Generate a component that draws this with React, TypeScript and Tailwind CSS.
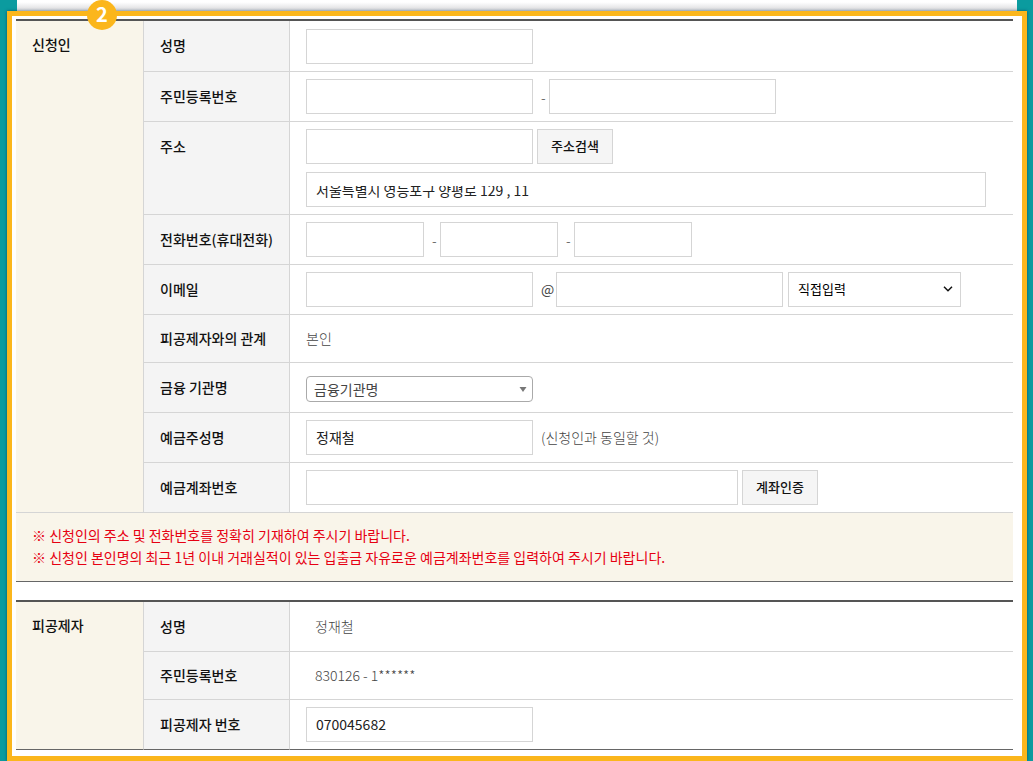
import type { ReactNode } from "react";
import clsx from "clsx";

const FIELD = "h-[35px] max-w-full border border-[#d5d5d5] bg-white px-[9px] pb-0.5 text-sm text-[#222] outline-none";
const BUTTON = "h-[35px] w-[76px] shrink-0 border border-[#d5d5d5] bg-[#f5f5f5] pb-0.5 text-[13px] font-medium text-[#111]";

export default function App() {
  return (
    <div className="min-h-screen bg-[#0b9b9f] pr-1.5 pl-[7px] font-['Noto_Sans_CJK_KR','Noto_Sans',sans-serif] text-sm leading-5 text-[#444]">
      <div className="mr-2.5 ml-2.5 h-[11px] bg-linear-to-b from-white from-20% to-[#d8d8da]" />
      <main className="relative border-5 border-[#fbb61c] bg-white pt-[3px] pr-[9px] pb-1.5 pl-1 shadow-[0_0_3px_rgba(0,40,80,0.6)]">
        <span className="absolute -top-4 left-[75px] flex size-[30px] items-center justify-center rounded-full bg-[#fbb61c] pb-0.5 text-xl font-bold text-white">
          2
        </span>

        <FormTable>
          <Row id="name" label="성명" group="신청인" span={9}>
            <input id="name" type="text" className={clsx(FIELD, "mt-px w-[227px]")} />
          </Row>
          <Row id="rrn" label="주민등록번호">
            <div className="flex items-center">
              <input id="rrn" type="text" className={clsx(FIELD, "w-[227px]")} />
              <Dash />
              <input aria-label="주민등록번호 뒷자리" type="text" className={clsx(FIELD, "w-[227px]")} />
            </div>
          </Row>
          <Row id="zip" label="주소" top>
            <div className="flex gap-1">
              <input id="zip" type="text" className={clsx(FIELD, "w-[227px]")} />
              <button type="button" className={BUTTON}>주소검색</button>
            </div>
            <div className="mt-2 h-[35px] w-[680px] max-w-full border border-[#d5d5d5] bg-white px-[9px] pt-[13px]">
              <div className="h-3.5 overflow-hidden">
                <input
                  aria-label="상세주소"
                  type="text"
                  defaultValue="서울특별시 영등포구 양평로 129 , 11"
                  className="-mt-1.5 block h-5 w-full text-sm leading-5 text-[#222] outline-none"
                />
              </div>
            </div>
          </Row>
          <Row id="tel" label="전화번호(휴대전화)">
            <div className="flex items-center">
              <input id="tel" type="tel" className={clsx(FIELD, "w-[118px]")} />
              <Dash />
              <input aria-label="전화번호 가운데자리" type="tel" className={clsx(FIELD, "w-[118px]")} />
              <Dash />
              <input aria-label="전화번호 끝자리" type="tel" className={clsx(FIELD, "w-[118px]")} />
            </div>
          </Row>
          <Row id="email" label="이메일">
            <div className="flex items-center">
              <input id="email" type="text" className={clsx(FIELD, "w-[227px]")} />
              <span className="w-[23px] shrink-0 pb-0.5 pl-2">@</span>
              <input aria-label="이메일 도메인" type="text" className={clsx(FIELD, "w-[227px]")} />
              <div className="relative ml-[5px] w-[173px]">
                <select aria-label="도메인 선택" className="block h-[35px] w-full appearance-none border border-[#d5d5d5] bg-white px-[9px] pb-0.5 text-[13px] text-black">
                  <option>직접입력</option>
                </select>
                <svg viewBox="0 0 10 6" className="pointer-events-none absolute top-3.5 right-2 h-1.5 w-2.5" fill="none" stroke="#111" strokeWidth="1.5">
                  <path d="M1 .8 5 4.8 9 .8" />
                </svg>
              </div>
            </div>
          </Row>
          <Row label="피공제자와의 관계">
            <p className="h-[33px] leading-8 font-light">본인</p>
          </Row>
          <Row id="bank" label="금융 기관명">
            <div className="flex h-[35px] items-center pt-0.5">
              <div className="relative w-[227px]">
                <select id="bank" className="block h-[26px] w-full appearance-none rounded-[4px] border border-[#aaa] bg-white px-[7px] text-sm text-[#444]">
                  <option>금융기관명</option>
                </select>
                <svg viewBox="0 0 8 5" className="pointer-events-none absolute top-[11px] right-1.5 h-[5px] w-2">
                  <path d="M.5 0h7L4 5z" fill="#777" />
                </svg>
              </div>
            </div>
          </Row>
          <Row id="holder" label="예금주성명">
            <div className="flex items-center gap-2">
              <input id="holder" type="text" defaultValue="정재철" className={clsx(FIELD, "w-[227px]")} />
              <span className="pb-0.5 font-light">(신청인과 동일할 것)</span>
            </div>
          </Row>
          <Row id="account" label="예금계좌번호">
            <div className="flex gap-1">
              <input id="account" type="text" className={clsx(FIELD, "w-[432px]")} />
              <button type="button" className={BUTTON}>계좌인증</button>
            </div>
          </Row>
          <tr>
            <td colSpan={3} className="border-b border-[#666] bg-[#f9f5ea] px-4 pt-[11px] pb-[13px] leading-[22px] text-[#e60012]">
              <p>※ 신청인의 주소 및 전화번호를 정확히 기재하여 주시기 바랍니다.</p>
              <p>※ 신청인 본인명의 최근 1년 이내 거래실적이 있는 입출금 자유로운 예금계좌번호를 입력하여 주시기 바랍니다.</p>
            </td>
          </tr>
        </FormTable>

        <div className="mt-[18px]">
          <FormTable>
            <Row label="성명" group="피공제자" span={3}>
              <p className="h-[35px] px-[9px] leading-[35px] font-light">정재철</p>
            </Row>
            <Row label="주민등록번호">
              <p className="h-[33px] px-[9px] leading-[33px] font-light">830126 - 1******</p>
            </Row>
            <Row id="insured" label="피공제자 번호" last>
              <input id="insured" type="text" defaultValue="070045682" className={clsx(FIELD, "block w-[227px]")} />
            </Row>
          </FormTable>
        </div>
      </main>
    </div>
  );
}

function FormTable({ children }: { children: ReactNode }) {
  return (
    <table className="w-full table-fixed border-separate border-spacing-0 border-t-2 border-[#555]">
      <colgroup>
        <col className="w-32" />
        <col className="w-[146px]" />
        <col />
      </colgroup>
      <tbody>{children}</tbody>
    </table>
  );
}

type RowProps = {
  id?: string;
  label: string;
  group?: string;
  span?: number;
  top?: boolean;
  last?: boolean;
  children: ReactNode;
};

function Row({ id, label, group, span, top, last, children }: RowProps) {
  const line = last ? "border-b-[#666]" : "border-b-[#d5d5d5]";
  return (
    <tr>
      {group && (
        <th
          scope="rowgroup"
          rowSpan={span}
          className={clsx(
            "border-r border-b border-r-[#d5d5d5] bg-[#f9f5ea] px-4 pt-[13px] text-left align-top font-medium text-[#111]",
            // the three-row group runs down to the closing rule
            span === 3 ? "border-b-[#666]" : "border-b-[#d5d5d5]",
          )}
        >
          {group}
        </th>
      )}
      <th
        scope="row"
        className={clsx(
          "border-r border-b border-r-[#d5d5d5] bg-[#f4f4f4] pb-0.5 pl-4 text-left font-medium whitespace-nowrap text-[#111]",
          top ? "pt-3.5 align-top" : "align-middle",
          line,
        )}
      >
        {id ? <label htmlFor={id}>{label}</label> : label}
      </th>
      <td className={clsx("border-b px-4 py-[7px]", line)}>{children}</td>
    </tr>
  );
}

function Dash() {
  return <span className="w-4 shrink-0 pl-2 font-light">-</span>;
}
